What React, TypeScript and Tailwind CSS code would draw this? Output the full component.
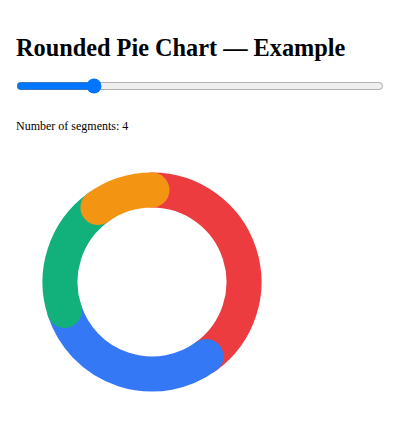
import { useState } from 'react';

const COLORS = ['#ec3c40', '#3578f5', '#12b07a', '#f39412'];
const VALUES = [40, 30, 20, 10];

function arcPath(cx: number, cy: number, r: number, start: number, end: number) {
  const toXY = (deg: number) => {
    const rad = (deg * Math.PI) / 180;
    return [cx + r * Math.sin(rad), cy - r * Math.cos(rad)];
  };
  const [x1, y1] = toXY(start);
  const [x2, y2] = toXY(end);
  const large = end - start > 180 ? 1 : 0;
  return `M ${x1} ${y1} A ${r} ${r} 0 ${large} 1 ${x2} ${y2}`;
}

function RoundedPie({ segments }: { segments: number }) {
  const values = VALUES.slice(0, segments);
  const total = values.reduce((a, b) => a + b, 0);
  let angle = 0;
  const arcs = values.map((v, i) => {
    const start = angle;
    const end = angle + (v / total) * 360;
    angle = end;
    return { start, end, color: COLORS[i % COLORS.length] };
  });

  return (
    <svg width={240} height={240} viewBox="0 0 240 240" className="block">
      {arcs.map((a, i) => (
        <path
          key={i}
          d={arcPath(120, 120, 92, a.start, a.end)}
          fill="none"
          stroke={a.color}
          strokeWidth={35}
          strokeLinecap="round"
        />
      ))}
    </svg>
  );
}

export default function App() {
  const [segments, setSegments] = useState(4);

  return (
    <div className="min-h-[446px] bg-white px-4 pt-[34px] text-black" style={{ fontFamily: '"Liberation Serif", "Times New Roman", serif' }}>
      <h1 className="text-[24.3px] font-bold leading-[27px]">Rounded Pie Chart — Example</h1>
      <input
        type="range"
        min={2}
        max={12}
        value={segments}
        onChange={(e) => setSegments(Number(e.target.value))}
        className="mt-[17px] block w-full"
      />
      <p className="mt-[25px] text-[12px] leading-[14px]">Number of segments: {segments}</p>
      <div className="mt-[29px] ml-4">
        <RoundedPie segments={segments} />
      </div>
    </div>
  );
}
